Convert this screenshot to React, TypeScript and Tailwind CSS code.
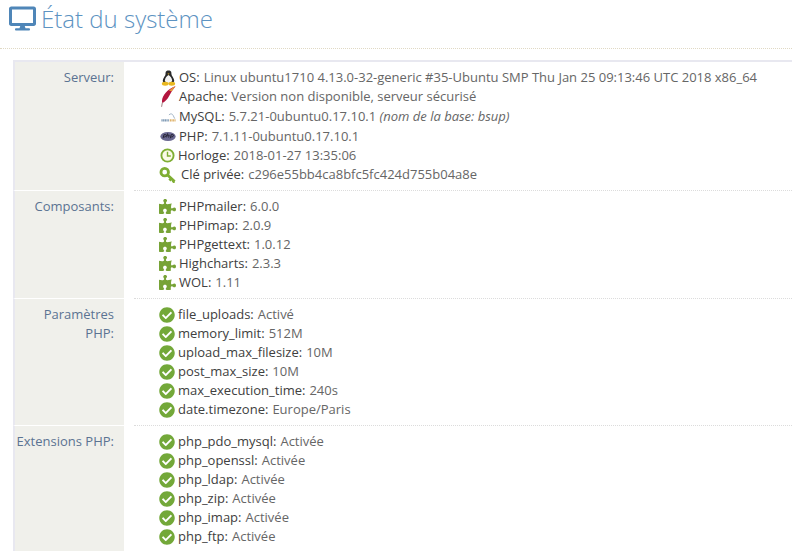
import React from "react";
import { FaPuzzlePiece, FaCheckCircle, FaDesktop } from "react-icons/fa";

const Puzzle = () => <FaPuzzlePiece className="w-[17px] h-[17px] text-[#77a336]" />;
const Check = () => <FaCheckCircle className="w-[16px] h-[16px] text-[#73a839]" />;

const Tux = () => (
  <svg width="15" height="16" viewBox="0 0 16 18" className="ml-[2px]">
    <path d="M8 .5C5 .5 4.500 2.500 4.700 4.500 4.800 6.500 1.500 9 1.500 12.500L3 15h10l1.500-2.500C14.500 9 11.200 6.500 11.300 4.500 11.500 2.500 11 .5 8 .5Z" fill="#2a2a2a" />
    <path d="M8 5.500C6 6.500 4 9 4 11.500 4 13.500 6 15 8 15S12 13.500 12 11.500C12 9 10 6.500 8 5.500Z" fill="#f4f4f4" />
    <path d="M6.800 3.800h2.400L8 5.400z" fill="#e9b820" />
    <ellipse cx="4.300" cy="15.400" rx="3.800" ry="2.200" fill="#e9b820" />
    <ellipse cx="11.700" cy="15.400" rx="3.800" ry="2.200" fill="#e9b820" />
  </svg>
);
const Feather = () => (
  <svg width="16" height="21" viewBox="0 0 17 22" className="ml-[1px] -mt-[1px]">
    <path d="M16.500 0C10 2 4.500 7 2.500 13 2 15 2 17 2.500 18 5 17 8 14 10 10 12 6 14 3 16.500 0Z" fill="#b3163f" />
    <path d="M16.500 0C13 1.500 11 3 9.500 5L12.500 5.500C14 3.500 15 2 16.500 0Z" fill="#e8983a" />
    <path d="M2.500 17.500 1.700 22" stroke="#9a7a7a" strokeWidth="1" />
  </svg>
);
const Mysql = () => (
  <svg width="17" height="10" viewBox="0 0 17 12" className="ml-[1px] mt-[1px]">
    <path d="M0 10h9" stroke="#7f9ab5" strokeWidth="2.500" strokeDasharray="1.500 .5" />
    <path d="M10 10h7" stroke="#dfb26a" strokeWidth="2.500" strokeDasharray="1.500 .5" />
    <path d="M9 3.500c2-2 4-1.500 5 .5l2 4" stroke="#a6b8c9" strokeWidth="1.200" fill="none" />
  </svg>
);
const Php = () => (
  <svg width="16" height="9" viewBox="0 0 17 10" className="ml-[1px]">
    <ellipse cx="8.500" cy="5" rx="8.500" ry="5" fill="#6a6890" />
    <path d="M3 7l1-4h2c1 0 1 2-1 2.500H4M7 6l1-4.500M7.800 3.500h2l-.6 2.700M11 7l1-4h2c1 0 1 2-1 2.500h-1" stroke="#15131f" strokeWidth=".9" fill="none" />
  </svg>
);
const Clock = () => (
  <svg width="15" height="15" viewBox="0 0 16 16" className="ml-[1px]">
    <circle cx="8" cy="8" r="6.500" fill="#fbfbe8" stroke="#7fae33" strokeWidth="2" />
    <path d="M8 4v4.500h3.500" stroke="#7fae33" strokeWidth="1.500" fill="none" />
  </svg>
);
const Key = () => (
  <svg width="18" height="16" viewBox="0 0 18 17">
    <circle cx="5.500" cy="5.500" r="4" fill="#fff" stroke="#7fae33" strokeWidth="3" />
    <path d="M8.800 8.800 16 15.500M12.500 12.300l-2 2M15.500 15l-1.500 1.500" stroke="#7fae33" strokeWidth="3" fill="none" />
  </svg>
);

type Item = { icon: React.ReactNode; label: string; value: React.ReactNode; h?: string; tx?: string };
const Row = ({ title, items, last }: { title: React.ReactNode; items: Item[]; last?: boolean }) => (
  <div className="flex">
    <div className={`w-[111px] shrink-0 bg-[#f0f0eb] border-l-2 border-l-[#e8e8f0] pr-[10px] pt-[6px] text-right text-[#5b7392] leading-[19px] ${last ? "" : "border-b border-b-white"}`}>
      {title}
    </div>
    <div className={`flex-1 ml-[10px] pl-[25px] pt-[6px] pb-[6px] ${last ? "" : "border-b border-dotted border-[#dcdcdc]"}`}>
      {items.map((it, i) => (
        <div key={i} className={`flex items-center whitespace-nowrap ${it.h ?? "h-[19px]"}`}>
          <span className={`shrink-0 flex items-center justify-start ${it.tx ?? "w-[20px]"}`}>{it.icon}</span>
          <span className="text-[#404040]">{it.label}:</span>
          <span className="ml-[4px] text-[#666]">{it.value}</span>
        </div>
      ))}
    </div>
  </div>
);

const c = <Check />;
const p = <Puzzle />;
const t = "w-[19px]";

export default function App() {
  return (
    <div className="w-[792px] h-[551px] overflow-hidden bg-white text-[13px] font-['Open_Sans',sans-serif]">
      <div className="h-[49px] flex items-start pl-[9px] pt-[4px] border-b border-dotted border-[#e0d9c4]">
        <FaDesktop className="w-[27px] h-[27px] text-[#4f86b8] mt-[1px]" />
        <h1 className="ml-[5px] -mt-[2px] text-[24px] leading-[33px] font-light text-[#5d93c2]">État du système</h1>
      </div>
      <div className="ml-[13px] mt-[11px] border-t-2 border-[#e8e8f0]">
        <Row
          title="Serveur:"
          items={[
            { icon: <Tux />, label: "OS", value: "Linux ubuntu1710 4.13.0-32-generic #35-Ubuntu SMP Thu Jan 25 09:13:46 UTC 2018 x86_64" },
            { icon: <Feather />, label: "Apache", value: "Version non disponible, serveur sécurisé" },
            { icon: <Mysql />, label: "MySQL", value: <>5.7.21-0ubuntu0.17.10.1 <i>(nom de la base: bsup)</i></>, h: "h-[21px]" },
            { icon: <Php />, label: "PHP", value: "7.1.11-0ubuntu0.17.10.1" },
            { icon: <Clock />, label: "Horloge", value: "2018-01-27 13:35:06", tx: t },
            { icon: <Key />, label: "Clé privée", value: "c296e55bb4ca8bfc5fc424d755b04a8e", tx: "w-[22px]" },
          ]}
        />
        <Row
          title="Composants:"
          items={[
            { icon: p, label: "PHPmailer", value: "6.0.0" },
            { icon: p, label: "PHPimap", value: "2.0.9" },
            { icon: p, label: "PHPgettext", value: "1.0.12" },
            { icon: p, label: "Highcharts", value: "2.3.3" },
            { icon: p, label: "WOL", value: "1.11" },
          ]}
        />
        <Row
          title={<>Paramètres<br />PHP:</>}
          items={[
            { icon: c, label: "file_uploads", value: "Activé", tx: t },
            { icon: c, label: "memory_limit", value: "512M", tx: t },
            { icon: c, label: "upload_max_filesize", value: "10M", tx: t },
            { icon: c, label: "post_max_size", value: "10M", tx: t },
            { icon: c, label: "max_execution_time", value: "240s", tx: t },
            { icon: c, label: "date.timezone", value: "Europe/Paris", tx: t },
          ]}
        />
        <Row
          last
          title="Extensions PHP:"
          items={[
            { icon: c, label: "php_pdo_mysql", value: "Activée", tx: t },
            { icon: c, label: "php_openssl", value: "Activée", tx: t },
            { icon: c, label: "php_ldap", value: "Activée", tx: t },
            { icon: c, label: "php_zip", value: "Activée", tx: t },
            { icon: c, label: "php_imap", value: "Activée", tx: t },
            { icon: c, label: "php_ftp", value: "Activée", tx: t },
          ]}
        />
      </div>
    </div>
  );
}
